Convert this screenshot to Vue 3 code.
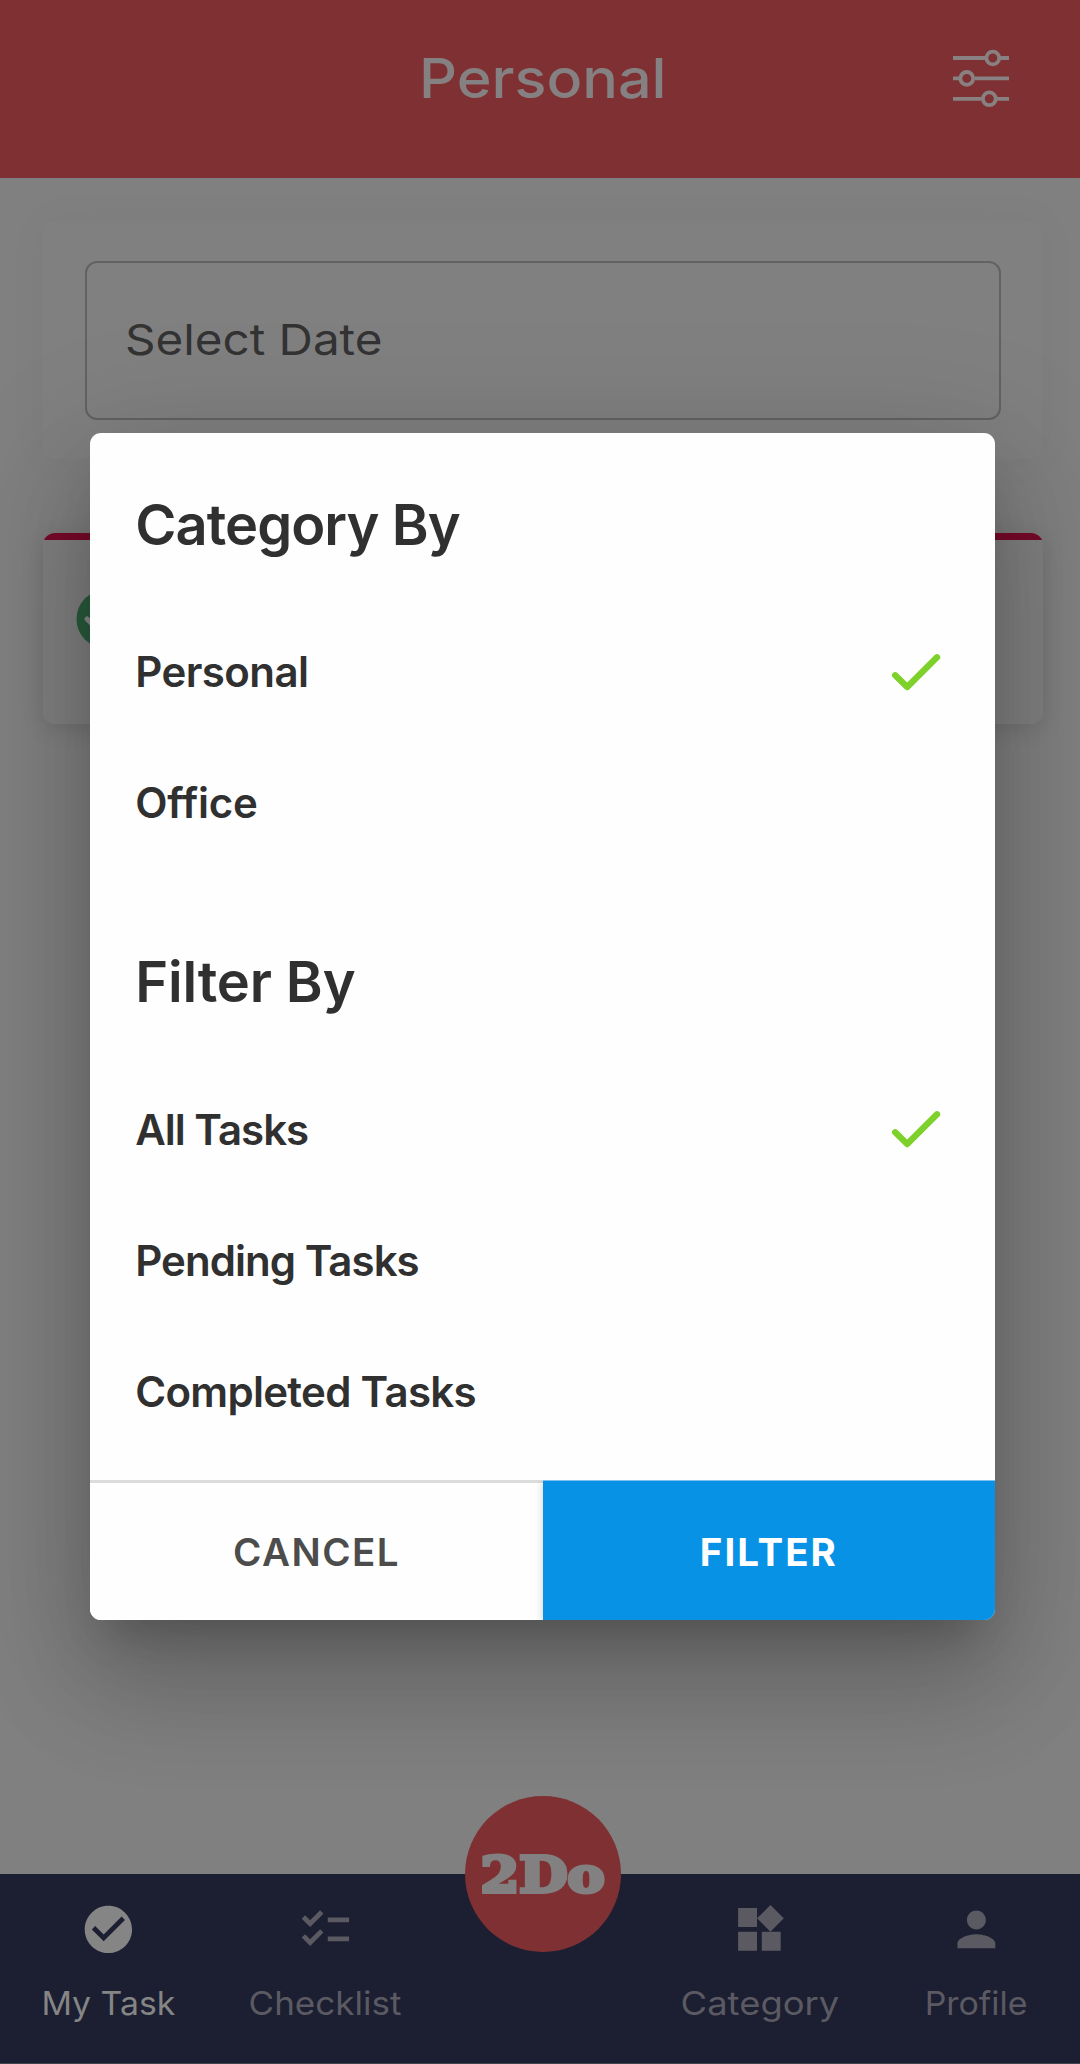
<script setup>
import { ref } from 'vue'

const category = ref('Personal')
const filter = ref('All Tasks')

const categories = [
  { label: 'Personal', spacing: -0.55 },
  { label: 'Office', spacing: -0.2 },
]
const filters = [
  { label: 'All Tasks', spacing: -1 },
  { label: 'Pending Tasks', spacing: -0.95 },
  { label: 'Completed Tasks', spacing: -0.7 },
]

const tabs = [
  {
    label: 'My Task',
    stretch: 1.024,
    active: true,
    icon: 'M12 2C6.5 2 2 6.5 2 12S6.5 22 12 22 22 17.5 22 12 17.5 2 12 2M10 17L5 12L6.41 10.59L10 14.17L17.59 6.58L19 8L10 17Z',
  },
  {
    label: 'Checklist',
    stretch: 1.062,
    icon: 'M22 7h-9v2h9V7zM22 15h-9v2h9v-2zM5.54 11L2 7.46l1.41-1.41 2.12 2.12 4.24-4.24 1.41 1.41L5.54 11zM5.54 19L2 15.46l1.41-1.41 2.12 2.12 4.24-4.24 1.41 1.41L5.54 19z',
  },
  { label: '', stretch: 1, icon: '' },
  {
    label: 'Category',
    stretch: 1.103,
    icon: 'M13 13v8h8v-8h-8zM3 21h8v-8H3v8zM3 3v8h8V3H3zM16.66 1.69L11 7.34 16.66 13l5.66-5.66-5.66-5.65z',
  },
  {
    label: 'Profile',
    stretch: 1.027,
    icon: 'M12 12c2.21 0 4-1.79 4-4s-1.79-4-4-4-4 1.79-4 4 1.79 4 4 4zm0 2c-2.67 0-8 1.34-8 4v2h16v-2c0-2.66-5.33-4-8-4z',
  },
]
</script>

<template>
  <div class="screen">
    <header class="bar">
      <h1>Personal</h1>
      <svg class="tune" width="60" height="64" viewBox="0 0 60 64">
        <g fill="none" stroke="#888081" stroke-width="3.8">
          <path d="M2 12h32M49 12h9M2 32.4h7M24 32.4h34M2 52.8h28.5M45.5 52.8H58" />
          <circle cx="41.8" cy="12" r="6.4" />
          <circle cx="15.8" cy="32.4" r="6.4" />
          <circle cx="38.3" cy="52.8" r="6.4" />
        </g>
      </svg>
    </header>

    <main class="content">
      <section class="date-card">
        <div class="date-field"><span>Select Date</span></div>
      </section>
      <section class="task-card">
        <svg width="60" height="60" viewBox="0 0 60 60">
          <circle cx="30" cy="30" r="29.5" fill="#295c3e" />
          <path d="M11 30l12 12 24-24" fill="none" stroke="#8a8a8a" stroke-width="5" stroke-linecap="round" />
        </svg>
      </section>
    </main>

    <nav class="tabs">
      <div v-for="(tab, i) in tabs" :key="i" class="tab" :class="{ active: tab.active }">
        <svg v-if="tab.icon" width="56.8" height="56.8" viewBox="0 0 24 24">
          <path :d="tab.icon" fill="currentColor" />
        </svg>
        <span :style="{ transform: `scaleX(${tab.stretch})` }">{{ tab.label }}</span>
      </div>
      <div class="logo"><b>2Do</b></div>
    </nav>

    <div class="overlay">
      <div class="dialog">
        <div class="options">
          <h2 class="cat-title">Category By</h2>
          <div v-for="c in categories" :key="c.label" class="option">
            <span :style="{ letterSpacing: c.spacing + 'px' }">{{ c.label }}</span>
            <svg v-if="c.label === category" width="56" height="46" viewBox="0 0 56 46">
              <path d="M7.2 26.3L19.2 38 49 8.3" />
            </svg>
          </div>
          <h2 class="filter-title">Filter By</h2>
          <div v-for="f in filters" :key="f.label" class="option">
            <span :style="{ letterSpacing: f.spacing + 'px' }">{{ f.label }}</span>
            <svg v-if="f.label === filter" width="56" height="46" viewBox="0 0 56 46">
              <path d="M7.2 26.3L19.2 38 49 8.3" />
            </svg>
          </div>
        </div>
        <div class="actions">
          <button class="cancel">CANCEL</button>
          <button class="apply">FILTER</button>
        </div>
      </div>
    </div>
  </div>
</template>

<style>
body {
  margin: 0;
  background: #808080;
}
</style>

<style scoped>
.screen {
  position: relative;
  width: 1080px;
  height: 2064px;
  overflow: hidden;
  display: flex;
  flex-direction: column;
  background: #808080;
  font-family: Inter, 'Liberation Sans', sans-serif;
}
.bar {
  box-sizing: border-box;
  width: 1085px;
  height: 178px;
  flex: none;
  display: grid;
  grid-template-columns: 1fr auto 1fr;
  align-items: center;
  padding: 0 74px 23px;
  background: #7f3032;
}
.bar h1 {
  grid-column: 2;
  margin: 0;
  font-size: 55px;
  line-height: 66px;
  font-weight: 500;
  transform: scaleX(1.078);
  color: #858081;
}
.tune {
  justify-self: end;
}
.content {
  flex: 1;
  width: 1085px;
}
.date-card {
  box-sizing: border-box;
  height: 238px;
  margin: 43px 43px 0;
  padding: 40px 41.5px 0;
  border-radius: 12px;
  background: #808080;
  box-shadow: 0 0 44px rgba(0, 0, 0, 0.04);
}
.date-field {
  box-sizing: border-box;
  height: 159px;
  border: 2px solid #626262;
  border-radius: 12px;
  padding-left: 38px;
  font-size: 43px;
  line-height: 152px;
  color: #333;
}
.date-field span {
  display: inline-block;
  transform: scaleX(1.106);
  transform-origin: 0 50%;
}
.task-card {
  box-sizing: border-box;
  height: 190.5px;
  margin: 74px 42.5px 0;
  padding: 56px 0 0 33px;
  border-radius: 12px;
  background: linear-gradient(#780a2b 7px, #808080 7px);
  box-shadow: 0 5px 22px rgba(0, 0, 0, 0.12);
}
.tabs {
  position: relative;
  flex: none;
  box-sizing: border-box;
  width: 1085px;
  height: 190px;
  display: grid;
  grid-template-columns: repeat(5, 217px);
  background: #1c1e31;
  border-bottom: 1px solid #43434d;
}
.tab {
  display: flex;
  flex-direction: column;
  align-items: center;
  padding-top: 27px;
  font-size: 33px;
  line-height: 40px;
  color: #5b5a62;
}
.tab span {
  margin-top: 25px;
}
.tab.active {
  color: #858585;
}
.logo {
  position: absolute;
  left: 465px;
  top: -78.5px;
  width: 156px;
  height: 156px;
  border-radius: 50%;
  display: flex;
  align-items: center;
  justify-content: center;
  background: #7f3032;
  color: #828080;
}
.logo b {
  margin-top: 2px;
  font: bold 48px/60px 'DejaVu Serif', serif;
  -webkit-text-stroke: 3.8px #828080;
  transform: scaleX(1.16);
}
.overlay {
  position: absolute;
  inset: 0;
  padding: 433.3px 0 0 90.4px;
}
.dialog {
  width: 904.6px;
  height: 1187.2px;
  display: flex;
  flex-direction: column;
  overflow: hidden;
  border-radius: 11px;
  background: #fefefe;
  box-shadow:
    0 30px 41px -19px rgba(0, 0, 0, 0.2),
    0 66px 105px 8px rgba(0, 0, 0, 0.14),
    0 25px 127px 22px rgba(0, 0, 0, 0.12);
}
.options {
  flex: 1;
  padding: 0 51px 0 44.8px;
  color: #303030;
}
.options h2 {
  box-sizing: border-box;
  margin: 0;
  font-size: 56px;
  line-height: 68px;
  font-weight: 600;
}
.cat-title {
  height: 173px;
  padding-top: 58px;
  letter-spacing: -0.95px;
}
.filter-title {
  height: 195.5px;
  padding-top: 80px;
  letter-spacing: -0.15px;
}
.option {
  height: 131px;
  display: flex;
  align-items: center;
  justify-content: space-between;
  font-size: 42px;
  font-weight: 600;
}
.option svg {
  fill: none;
  stroke: #7ed02a;
  stroke-width: 6.4;
  stroke-linecap: round;
  stroke-linejoin: round;
}
.actions {
  flex: none;
  display: grid;
  grid-template-columns: 1fr 1fr;
  height: 140px;
}
.actions button {
  margin: 0;
  border: 0;
  padding: 3px 0 0;
  font-family: inherit;
  font-size: 38.5px;
}
.actions .cancel {
  padding: 0;
  border-top: 3px solid #dcdcdc;
  background: #fefefe;
  color: #4c4c4c;
  font-weight: 600;
  letter-spacing: 1.5px;
}
.actions .apply {
  background: #0892e6;
  color: #fff;
  font-weight: 700;
  letter-spacing: 2px;
  box-shadow: 0 2px 8px rgba(0, 0, 0, 0.2);
  clip-path: inset(0 0 0 -20px);
}
</style>
